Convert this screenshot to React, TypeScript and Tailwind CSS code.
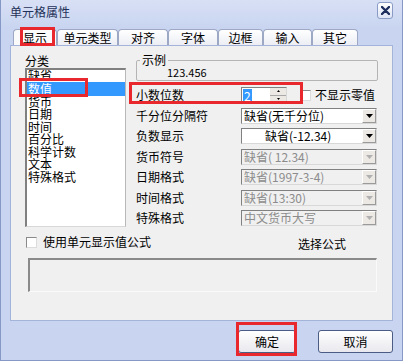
import type { ReactNode } from 'react'

const tabs = [
  { label: '显示', w: 'w-[44px]' },
  { label: '单元类型', w: 'w-[61px]' },
  { label: '对齐', w: 'w-[50px]' },
  { label: '字体', w: 'w-[50px]' },
  { label: '边框', w: 'w-[45px]' },
  { label: '输入', w: 'w-[49px]' },
  { label: '其它', w: 'w-[46px]' },
]

const categories = ['缺省', '数值', '货币', '日期', '时间', '百分比', '科学计数', '文本', '特殊格式']

function Arrow({ disabled }: { disabled?: boolean }) {
  return (
    <div className="w-[14px] h-full flex items-center justify-center bg-[#ece9e4] border-l border-t border-white border-r border-b border-r-[#9a9a9a] border-b-[#9a9a9a]">
      <svg width="7" height="4" viewBox="0 0 7 4">
        <path d="M0 0h7L3.5 4z" fill={disabled ? '#b0b0b0' : '#000'} />
      </svg>
    </div>
  )
}

function Select({ value, disabled, center }: { value: string; disabled?: boolean; center?: boolean }) {
  return (
    <div
      className={`flex w-[136px] h-[16px] border-t border-l border-[#808080] border-r border-b border-r-[#d8d8d8] border-b-[#d8d8d8] ${
        disabled ? 'bg-[#f0f0f0] text-[#8c8c8c]' : 'bg-white text-black'
      }`}
    >
      <span className={`flex-1 leading-[14px] whitespace-nowrap ${center ? 'pl-[23px]' : 'pl-[2px]'}`}>{value}</span>
      <Arrow disabled={disabled} />
    </div>
  )
}

function Row({ label, children }: { label: string; children: ReactNode }) {
  return (
    <div className="flex items-center h-[16px]">
      <span className="w-[105px] leading-[14px]">{label}</span>
      {children}
    </div>
  )
}

function Checkbox() {
  return <div className="w-[11px] h-[11px] bg-white border border-[#8a8a8a] border-r-[#dcdcdc] border-b-[#dcdcdc]" />
}

export default function App() {
  return (
    <div className="relative w-[403px] h-[361px] overflow-hidden flex flex-col bg-[#c8d4f0] border-x border-b border-[#8699c6] text-[12px] text-black font-['Noto_Sans_CJK_SC','Noto_Sans',sans-serif]">
      {/* Title bar */}
      <div className="h-[29px] flex items-start justify-between pl-[9px] pr-[9px] bg-gradient-to-b from-[#d8e0f5] to-[#c8d4f0]">
        <span className="pt-[5px] leading-[14px] text-[#1f3158]">单元格属性</span>
        <div className="mt-[2px] w-[16px] h-[17px] rounded-[3px] border border-[#8a9cc6] bg-gradient-to-b from-white to-[#dde4f5] flex items-center justify-center">
          <svg width="9" height="9" viewBox="0 0 9 9">
            <path d="M1 1l7 7M8 1L1 8" stroke="#1d2f5e" strokeWidth="2.4" strokeLinecap="round" />
          </svg>
        </div>
      </div>

      {/* Tabs */}
      <div className="h-[16px] flex pl-[12px]">
        {tabs.map((t, i) => (
          <div
            key={t.label}
            className={`${t.w} h-full flex items-center justify-center rounded-t-[4px] border border-b-0 border-[#9ca8c4] leading-[14px] ${
              i === 0 ? 'bg-[#fafafa]' : 'bg-gradient-to-b from-white to-[#eceef4]'
            }`}
          >
            {t.label}
          </div>
        ))}
      </div>

      {/* Panel */}
      <div className="mx-[9px] h-[276px] flex flex-col border border-[#a3b3d9] bg-[#f0f0f0]">
        <div className="flex pt-[8px]">
          <div className="ml-[14px] w-[101px] flex flex-col">
            <span className="h-[14px] leading-[14px]">分类</span>
            <div className="h-[159px] overflow-hidden bg-white border-t-2 border-l-2 border-[#808080] border-r border-b border-r-[#b8b8b8] border-b-[#d8d8d8]">
              <div className="-mt-[1px] flex flex-col">
                {categories.map((c, i) => (
                  <span
                    key={c}
                    className={`leading-[12.5px] pl-[1px] ${i === 1 ? 'bg-[#3399ff] text-white h-[14px] leading-[14px]' : ''}`}
                  >
                    {c}
                  </span>
                ))}
              </div>
            </div>
          </div>

          <div className="ml-[10px] w-[242px] flex flex-col">
            <fieldset className="-mt-[1px] border border-[#b4b4b4] rounded-[2px] pb-[2px]">
              <legend className="ml-[3px] px-[2px] leading-[14px]">示例</legend>
              <div className="-mt-[1px] pl-[30px] leading-[12px] text-[11px]">123.456</div>
            </fieldset>

            <div className="mt-[6px] flex flex-col gap-[4.5px]">
              <Row label="小数位数">
                <div className="flex w-[46px] h-[16px] bg-white border-t border-l border-[#808080] border-r border-b border-r-[#d8d8d8] border-b-[#d8d8d8]">
                  <div className="flex-1 flex items-center pl-[1px]">
                    <span className="bg-[#3399ff] text-white leading-[13px] px-[1px]">2</span>
                  </div>
                  <div className="w-[16px] flex flex-col">
                    <div className="flex-1 flex items-center justify-center bg-[#ece9e4] border-b border-[#a8a8a8]">
                      <svg width="3" height="2" viewBox="0 0 3 2"><path d="M0 2h3L1.5 0z" fill="#000" /></svg>
                    </div>
                    <div className="flex-1 flex items-center justify-center bg-[#ece9e4]">
                      <svg width="3" height="2" viewBox="0 0 3 2"><path d="M0 0h3L1.5 2z" fill="#000" /></svg>
                    </div>
                  </div>
                </div>
                <div className="ml-[13px] flex items-center gap-[4px]">
                  <Checkbox />
                  <span className="leading-[14px] whitespace-nowrap">不显示零值</span>
                </div>
              </Row>
              <Row label="千分位分隔符">
                <Select value="缺省(无千分位)" />
              </Row>
              <Row label="负数显示">
                <Select value="缺省(-12.34)" center />
              </Row>
              <Row label="货币符号">
                <Select value="缺省( 12.34)" disabled />
              </Row>
              <Row label="日期格式">
                <Select value="缺省(1997-3-4)" disabled />
              </Row>
              <Row label="时间格式">
                <Select value="缺省(13:30)" disabled />
              </Row>
              <Row label="特殊格式">
                <Select value="中文货币大写" disabled />
              </Row>
            </div>
          </div>
        </div>

        <div className="mt-[8px] h-[14px] flex items-center">
          <div className="ml-[15px]">
            <Checkbox />
          </div>
          <span className="ml-[6px] leading-[14px]">使用单元显示值公式</span>
          <span className="ml-auto mr-[46px] mt-[4px] leading-[14px]">选择公式</span>
        </div>

        <div className="mt-[9px] ml-[17px] w-[349px] h-[34px] bg-[#f0f0f0] border-t-2 border-l-2 border-[#8a8a8a] border-r border-b border-r-[#fafafa] border-b-[#fafafa]" />
      </div>

      {/* Buttons */}
      <div className="mt-[9px] flex justify-end pr-[9px] gap-[22px]">
        <button className="w-[58px] h-[23px] rounded-[3px] border border-[#4a5c84] bg-gradient-to-b from-white to-[#e8e8ee] leading-[14px]">
          确定
        </button>
        <button className="w-[75px] h-[23px] rounded-[3px] border border-[#4a5c84] bg-gradient-to-b from-white to-[#e8e8ee] leading-[14px]">
          取消
        </button>
      </div>

      {/* Red annotation boxes */}
      <div className="absolute left-[19px] top-[27px] w-[35px] h-[19px] border-[3px] border-[#e8282c]" />
      <div className="absolute left-[18px] top-[78px] w-[69px] h-[19px] border-[3px] border-[#e8282c]" />
      <div className="absolute left-[128px] top-[82px] w-[174px] h-[22px] border-[3px] border-[#e8282c]" />
      <div className="absolute left-[235px] top-[322px] w-[61px] h-[34px] border-[3px] border-[#e8282c]" />
    </div>
  )
}
